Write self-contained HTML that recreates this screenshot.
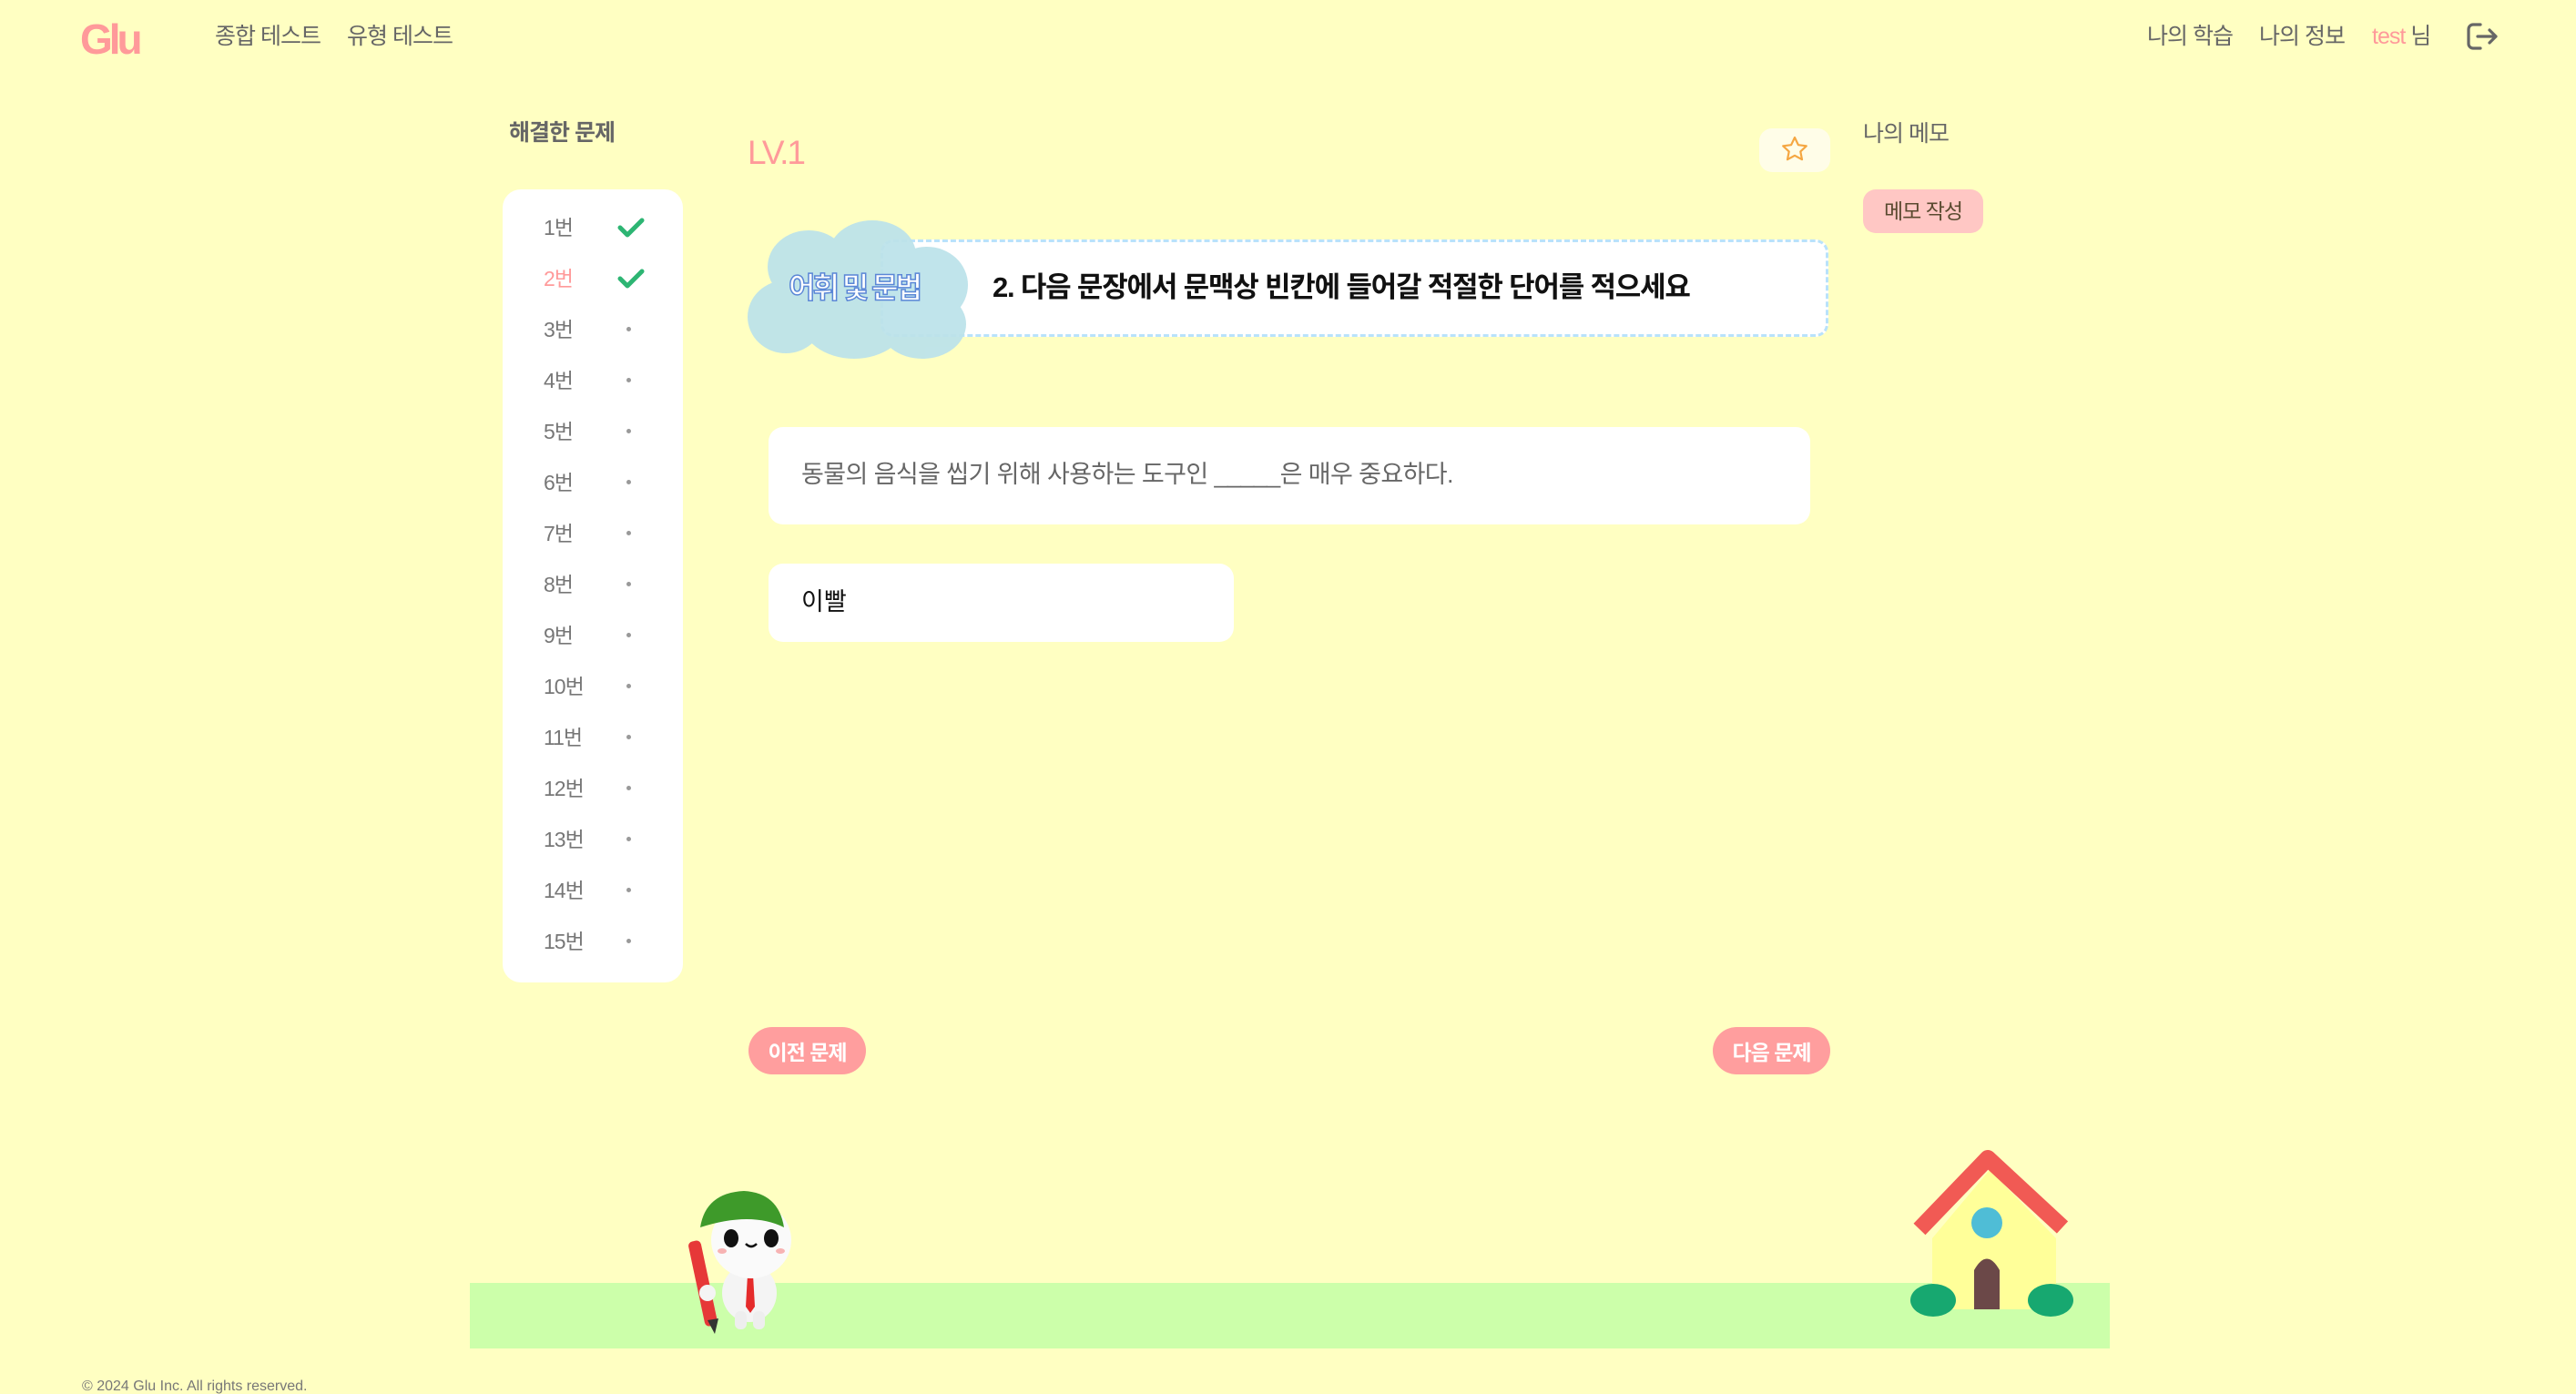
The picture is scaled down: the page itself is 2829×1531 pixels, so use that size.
<!DOCTYPE html>
<html><head><meta charset="utf-8"><style>
*{margin:0;padding:0;box-sizing:border-box}
body{width:2829px;height:1531px;background:#ffffc2;position:relative;overflow:hidden;font-family:"Liberation Sans","Noto Sans CJK KR",sans-serif;color:#666}
.a{position:absolute;white-space:nowrap;line-height:1}
.nav{font-size:25px;color:#666;letter-spacing:-1px}
.panel{position:absolute;left:552px;top:208px;width:198px;height:871px;background:#fff;border-radius:20px}
.it{position:absolute;left:45px;font-size:23px;color:#777;line-height:1;letter-spacing:-1px}
.dot{position:absolute;left:136px;width:5px;height:5px;border-radius:50%;background:#999}
.btn{position:absolute;top:1128px;width:129px;height:52px;border-radius:26px;background:#ff9e9e;color:#fff;font-weight:bold;font-size:23px;display:flex;align-items:center;justify-content:center;letter-spacing:-1px}
</style></head><body>
<div class="a" style="left:88px;top:20px;font-size:46px;font-weight:bold;color:#ff9a9a;letter-spacing:-4px">Glu</div>
<div class="a nav" style="left:236px;top:28px">종합 테스트</div>
<div class="a nav" style="left:381px;top:28px">유형 테스트</div>
<div class="a nav" style="left:2358px;top:28px">나의 학습</div>
<div class="a nav" style="left:2481px;top:28px">나의 정보</div>
<div class="a nav" style="left:2605px;top:28px"><span style="color:#ff9a9a">test</span> 님</div>
<svg class="a" style="left:2708px;top:24px" width="36" height="32" viewBox="0 0 36 32"><path d="M16 3H8a5 5 0 0 0-5 5v16a5 5 0 0 0 5 5h8M13 16h20M26 9l7 7-7 7" fill="none" stroke="#666" stroke-width="3.2" stroke-linecap="round" stroke-linejoin="round"/></svg>

<div class="a" style="left:559px;top:134px;font-size:25px;color:#666;font-weight:bold;letter-spacing:-1px">해결한 문제</div>
<div class="panel">
<div class="it" style="top:31px">1번</div>
<svg style="position:absolute;left:126px;top:31px" width="30" height="22" viewBox="0 0 30 22"><path d="M3 11l8 8L27 3" fill="none" stroke="#2db573" stroke-width="5" stroke-linecap="round" stroke-linejoin="round"/></svg>
<div class="it" style="top:87px;color:#ff9a9a">2번</div>
<svg style="position:absolute;left:126px;top:87px" width="30" height="22" viewBox="0 0 30 22"><path d="M3 11l8 8L27 3" fill="none" stroke="#2db573" stroke-width="5" stroke-linecap="round" stroke-linejoin="round"/></svg>
<div class="it" style="top:143px">3번</div><div class="dot" style="top:151px"></div>
<div class="it" style="top:199px">4번</div><div class="dot" style="top:207px"></div>
<div class="it" style="top:255px">5번</div><div class="dot" style="top:263px"></div>
<div class="it" style="top:311px">6번</div><div class="dot" style="top:319px"></div>
<div class="it" style="top:367px">7번</div><div class="dot" style="top:375px"></div>
<div class="it" style="top:423px">8번</div><div class="dot" style="top:431px"></div>
<div class="it" style="top:479px">9번</div><div class="dot" style="top:487px"></div>
<div class="it" style="top:535px">10번</div><div class="dot" style="top:543px"></div>
<div class="it" style="top:591px">11번</div><div class="dot" style="top:599px"></div>
<div class="it" style="top:647px">12번</div><div class="dot" style="top:655px"></div>
<div class="it" style="top:703px">13번</div><div class="dot" style="top:711px"></div>
<div class="it" style="top:759px">14번</div><div class="dot" style="top:767px"></div>
<div class="it" style="top:815px">15번</div><div class="dot" style="top:823px"></div>
</div>

<div class="a" style="left:821px;top:149px;font-size:37px;color:#ff9a9a;letter-spacing:-2px">LV.1</div>
<div class="a" style="left:1932px;top:141px;width:78px;height:48px;border-radius:14px;background:#fffde8"></div>
<svg class="a" style="left:1955px;top:148px" width="32" height="32" viewBox="0 0 32 32"><path d="M16 3l3.9 8.2 8.9 1.1-6.5 6.1 1.7 8.8L16 22.8l-8 4.4 1.7-8.8-6.5-6.1 8.9-1.1z" fill="none" stroke="#f5a742" stroke-width="2.2" stroke-linejoin="round"/></svg>
<div class="a" style="left:2046px;top:135px;font-size:25px;color:#666;letter-spacing:-1px">나의 메모</div>
<div class="a" style="left:2046px;top:208px;width:132px;height:48px;border-radius:14px;background:#ffc7c4;color:#5a4a30;font-size:23px;display:flex;align-items:center;justify-content:center;letter-spacing:-1px">메모 작성</div>

<div class="a" style="left:967px;top:263px;width:1041px;height:107px;background:#fff;border:3px dashed #b9e2fb;border-radius:14px"></div>
<svg class="a" style="left:818px;top:238px" width="250" height="162" viewBox="0 0 250 162">
<g fill="#bde3ea" opacity="0.95">
<ellipse cx="70" cy="55" rx="45" ry="40"/><ellipse cx="140" cy="42" rx="48" ry="38"/><ellipse cx="200" cy="75" rx="45" ry="42"/>
<ellipse cx="45" cy="110" rx="42" ry="40"/><ellipse cx="120" cy="110" rx="60" ry="46"/><ellipse cx="195" cy="118" rx="48" ry="38"/>
<rect x="40" y="60" width="180" height="70"/></g></svg>
<div class="a" style="left:866px;top:300px;font-size:32px;font-weight:bold;color:#fff;-webkit-text-stroke:1.5px #5a86d6;letter-spacing:-3px">어휘 및 문법</div>
<div class="a" style="left:1090px;top:300px;font-size:31px;font-weight:bold;color:#111;letter-spacing:-1.2px">2. 다음 문장에서 문맥상 빈칸에 들어갈 적절한 단어를 적으세요</div>

<div class="a" style="left:844px;top:469px;width:1144px;height:107px;background:#fff;border-radius:16px"></div>
<div class="a" style="left:880px;top:508px;font-size:27px;color:#666;letter-spacing:-0.6px">동물의 음식을 씹기 위해 사용하는 도구인 _____은 매우 중요하다.</div>
<div class="a" style="left:844px;top:619px;width:511px;height:86px;background:#fff;border-radius:16px"></div>
<div class="a" style="left:880px;top:648px;font-size:27px;color:#111">이빨</div>

<div class="btn" style="left:822px">이전 문제</div>
<div class="btn" style="left:1881px">다음 문제</div>

<div class="a" style="left:516px;top:1409px;width:1801px;height:72px;background:#ccffaa"></div>
<svg class="a" style="left:755px;top:1300px" width="125" height="165" viewBox="0 0 125 165">
<rect x="10" y="62" width="14" height="95" rx="5" fill="#e63838" transform="rotate(-12 17 110)"/>
<polygon points="22,150 34,148 30,165" fill="#333"/>
<ellipse cx="68" cy="120" rx="30" ry="32" fill="#f4f4f4"/>
<rect x="52" y="140" width="13" height="20" rx="6" fill="#eee"/><rect x="72" y="140" width="13" height="20" rx="6" fill="#eee"/>
<polygon points="66,100 72,100 74,135 69,142 64,135" fill="#e52b2b"/>
<ellipse cx="70" cy="62" rx="44" ry="42" fill="#fafafa"/>
<path d="M14 48 Q20 10 62 8 Q100 10 106 48 Q70 30 14 48Z" fill="#3e9a2a"/>
<ellipse cx="48" cy="60" rx="8" ry="10" fill="#111"/><ellipse cx="92" cy="60" rx="8" ry="10" fill="#111"/>
<path d="M64 66 Q70 72 76 66" stroke="#111" stroke-width="2.5" fill="none"/>
<ellipse cx="38" cy="74" rx="5" ry="3" fill="#f7b3b3"/><ellipse cx="102" cy="74" rx="5" ry="3" fill="#f7b3b3"/>
<circle cx="22" cy="120" r="9" fill="#f4f4f4"/>
</svg>
<svg class="a" style="left:2090px;top:1260px" width="200" height="190" viewBox="0 0 200 190">
<polygon points="95,25 168,100 168,178 32,178 32,100" fill="#ffff99"/>
<path d="M18 90 L93 12 L175 88" fill="none" stroke="#f04848" stroke-width="18" stroke-linejoin="round" opacity="0.9"/>
<circle cx="92" cy="83" r="17" fill="#4fbdd6"/>
<path d="M78 178 V135 Q92 110 106 135 V178Z" fill="#6b4848"/>
<ellipse cx="33" cy="168" rx="25" ry="18" fill="#17a870"/><ellipse cx="162" cy="168" rx="25" ry="18" fill="#17a870"/>
</svg>
<div class="a" style="left:90px;top:1515px;font-size:16px;color:#777">© 2024 Glu Inc. All rights reserved.</div>
</body></html>
